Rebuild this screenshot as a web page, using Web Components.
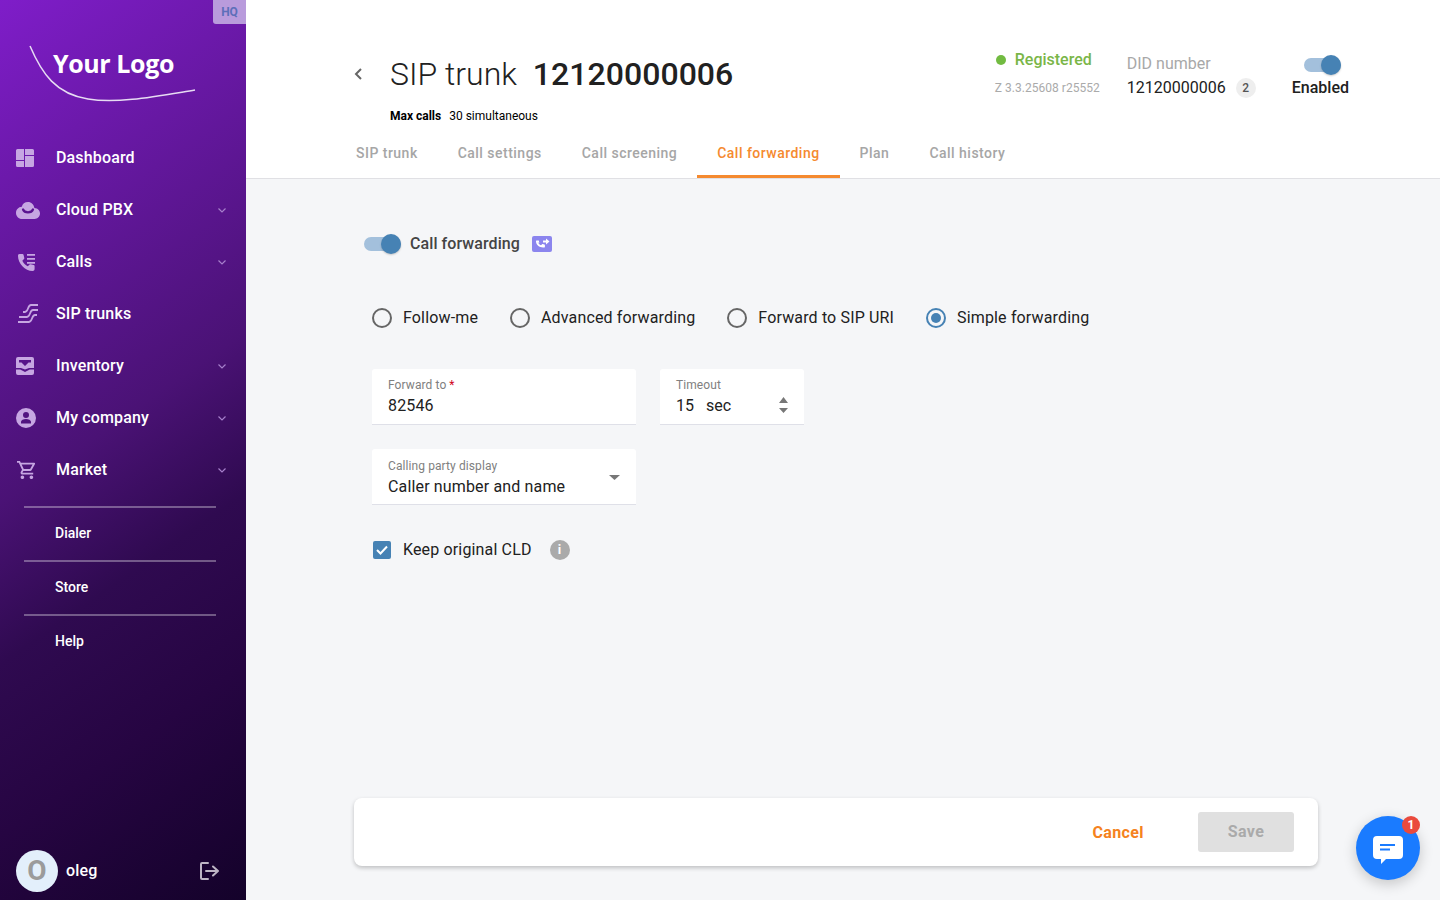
<!DOCTYPE html>
<html lang="en">
<head>
<meta charset="utf-8">
<title>SIP trunk</title>
<style>
    html, body { margin: 0; height: 100%; overflow: hidden; }
    body { font-family: Roboto, "Liberation Sans", sans-serif; color: #212121; }
</style>
</head>
<body>

<app-shell>
    <app-sidebar slot="sidebar">
        <nav-item label="Dashboard" icon="dashboard"></nav-item>
        <nav-item label="Cloud PBX" icon="cloud" expandable></nav-item>
        <nav-item label="Calls" icon="calls" expandable></nav-item>
        <nav-item label="SIP trunks" icon="trunks"></nav-item>
        <nav-item label="Inventory" icon="inventory" expandable></nav-item>
        <nav-item label="My company" icon="company" expandable></nav-item>
        <nav-item label="Market" icon="market" expandable></nav-item>
        <sub-link first>Dialer</sub-link>
        <sub-link>Store</sub-link>
        <sub-link>Help</sub-link>
    </app-sidebar>

    <page-header slot="header"></page-header>

    <tab-bar slot="header">
        <tab-item>SIP trunk</tab-item>
        <tab-item>Call settings</tab-item>
        <tab-item>Call screening</tab-item>
        <tab-item active>Call forwarding</tab-item>
        <tab-item>Plan</tab-item>
        <tab-item>Call history</tab-item>
    </tab-bar>

    <forward-form></forward-form>
    <action-bar slot="footer"></action-bar>
    <chat-button slot="overlay"></chat-button>
</app-shell>

<script>
    // Icons are kept here so nav-item only has to name one
    const navIcons = {
        dashboard: `<svg width="18" height="18" viewBox="0 0 18 18" fill="currentColor"><path d="M1.500 0H8v11H0V1.500A1.500 1.500 0 0 1 1.500 0zM0 12h8v6H1.500A1.500 1.500 0 0 1 0 16.500zM9 0h7.500A1.500 1.500 0 0 1 18 1.500V6H9zM9 7h9v9.500a1.500 1.500 0 0 1-1.500 1.500H9z"/></svg>`,
        cloud: `<svg width="24" height="17" viewBox="0 0 24 17"><path fill="currentColor" d="M12 0C8.700 0 6.400 2 5.800 4.800 2.500 5 0 7.600 0 11c0 3.300 2.700 6 6 6h12.600c3 0 5.400-2.400 5.400-5.400 0-3-2.300-5.400-5.600-5.600C17.800 2.400 15.400 0 12 0z"/><path d="M7 7.500c1.500 3.800 8.500 3.800 10 0" fill="none" stroke="#5a1490" stroke-width="2.200" stroke-linecap="round"/></svg>`,
        calls: `<svg width="20" height="20" viewBox="0 -1 20 20" fill="currentColor"><path d="M2.500 1h3c.6 0 1 .4 1.100.9l.7 3c.1.400 0 .8-.3 1.100L5.300 7.800c1.200 2.400 3.100 4.300 5.500 5.500l1.800-1.700c.3-.3.700-.4 1.100-.3l3 .7c.5.100.9.500.9 1.100v3c0 1.200-.8 2-2 2C8 18.100 1 10.500 1 3c0-1.200.3-2 1.500-2z" transform="translate(1 0)"/><path d="M11 1h8v1.800h-8zM11 5h8v1.800h-8zM11 9h8v1.800h-8z"/></svg>`,
        trunks: `<svg width="20" height="20" viewBox="0 0 20 20" fill="none" stroke="currentColor" stroke-width="1.800" style="margin-left:2px"><path d="M5 8 H7 C10.500 8 9.500 1 13 1 H20"/><path d="M1 13 H9 C12.500 13 11.500 6 15 6 H20"/><path d="M0 18 H11 C14.500 18 13.500 11 17 11 H19"/></svg>`,
        inventory: `<svg width="18" height="18" viewBox="0 0 18 18" fill="currentColor"><path fill-rule="evenodd" d="M2 0h14a2 2 0 0 1 2 2v9H13l-4 1.500L5 11H0V2a2 2 0 0 1 2-2zM3 3v2.500h2.500L9 9l3.500-3.500H15V3z"/><path d="M0 12.500h4.200L9 15l4.800-2.500H18V16a2 2 0 0 1-2 2H2a2 2 0 0 1-2-2z"/></svg>`,
        company: `<svg width="20" height="20" viewBox="0 0 20 20" fill="currentColor"><path fill-rule="evenodd" d="M10 0a10 10 0 1 1 0 20 10 10 0 0 1 0-20zM10 4a3 3 0 1 0 0 6 3 3 0 0 0 0-6zM10 11c-2.500 0-5 1.200-5 2.800V15.500h10v-1.700C15 12.200 12.500 11 10 11z"/></svg>`,
        market: `<svg width="18" height="18" viewBox="1 2 20 20" fill="currentColor" style="margin-left:1px"><path d="M15.550 13c.750 0 1.410-.410 1.750-1.030l3.580-6.490A.996.996 0 0 0 20.010 4H5.210l-.940-2H1v2h2l3.600 7.590-1.350 2.440C4.520 15.370 5.480 17 7 17h12v-2H7l1.100-2h7.450zM6.160 6h12.150l-2.760 5H8.530L6.160 6zM7 18c-1.100 0-1.990.900-1.990 2S5.900 22 7 22s2-.900 2-2-.900-2-2-2zm10 0c-1.100 0-1.990.900-1.990 2s.890 2 1.990 2 2-.900 2-2-.900-2-2-2z"/></svg>`
    };

    // Page frame: sidebar on the left, everything else in the right column
    class AppShell extends HTMLElement {
        constructor() {
            super();
            this.attachShadow({ mode: 'open' }).innerHTML = `
                <style>
                    :host { display: flex; height: 100vh; position: relative; }
                    .main { flex: 1; min-width: 0; display: flex; flex-direction: column; background: #f5f6f8; }
                    .head { background: #fff; border-bottom: 1px solid #e0e0e4; height: 178px; display: flex; flex-direction: column; }
                    .body { flex: 1; min-height: 0; }
                </style>
                <slot name="sidebar"></slot>
                <div class="main">
                    <div class="head"><slot name="header"></slot></div>
                    <div class="body"><slot></slot></div>
                    <slot name="footer"></slot>
                </div>
                <slot name="overlay"></slot>`;
        }
    }

    class AppSidebar extends HTMLElement {
        constructor() {
            super();
            this.attachShadow({ mode: 'open' }).innerHTML = `
                <style>
                    :host {
                        display: flex; flex-direction: column; position: relative;
                        width: 246px; flex: none; color: #fff;
                        background: linear-gradient(145deg, #7f1dc9 0%, #4a1275 47%, #2f0a50 62%, #260542 78%, #14022a 100%);
                    }
                    .hq {
                        position: absolute; top: 0; right: 0; width: 33px; height: 24px;
                        background: #b99bdc; border-bottom-left-radius: 3px;
                        color: #5d6fb9; font-size: 12px; font-weight: 700; line-height: 24px; text-align: center;
                    }
                    .logo { height: 131px; position: relative; flex: none; }
                    .logo span {
                        position: absolute; left: 53px; top: 46px;
                        font: 700 25px/34px "Open Sans", sans-serif; letter-spacing: -.4px;
                    }
                    .logo svg { position: absolute; left: 28px; top: 44px; }
                    nav { flex: 1; }
                    .user { display: flex; align-items: center; height: 42px; padding: 0 27px 8px 16px; }
                    .avatar {
                        width: 42px; height: 42px; border-radius: 50%; background: #e3effb;
                        color: #9b9b9b; font-size: 28px; font-weight: 700; line-height: 42px; text-align: center;
                    }
                    .name { margin: 0 0 2px 8px; font-size: 16px; font-weight: 500; flex: 1; letter-spacing: .15px; }
                    .out { color: #bdb5c4; display: block; }
                </style>
                <div class="hq">HQ</div>
                <div class="logo">
                    <svg width="170" height="62" viewBox="0 0 170 62" fill="none" stroke="#e7dcf3" stroke-width="1.500"><path d="M2 2 C14 30 28 50 60 55 C90 60 130 52 167 46"/></svg>
                    <span>Your Logo</span>
                </div>
                <nav><slot></slot></nav>
                <div class="user">
                    <div class="avatar">O</div>
                    <div class="name">oleg</div>
                    <svg class="out" width="20" height="20" viewBox="0 0 20 20" fill="none" stroke="currentColor" stroke-width="2" stroke-linejoin="round" stroke-linecap="round"><path d="M9 2H3a1 1 0 0 0-1 1v14a1 1 0 0 0 1 1h6"/><path d="M7 10h12M14 5.500l5 4.500-5 4.500"/></svg>
                </div>`;
        }
    }

    class NavItem extends HTMLElement {
        connectedCallback() {
            const chevron = this.hasAttribute('expandable')
                ? `<svg class="chev" width="8" height="5" viewBox="0 0 8 5" fill="none" stroke="#a67fcb" stroke-width="1.200"><path d="M.5.5L4 4 7.500.5"/></svg>`
                : '';
            this.attachShadow({ mode: 'open' }).innerHTML = `
                <style>
                    :host { display: flex; align-items: center; height: 52px; color: #c6a6e2; }
                    .ic { width: 40px; margin: 2px 0 0 16px; display: flex; align-items: center; }
                    .ic svg { display: block; }
                    .label { flex: 1; color: #fff; font-size: 16px; font-weight: 500; letter-spacing: .15px; }
                    .chev { margin-right: 20px; margin-top: 2px; }
                </style>
                <span class="ic">${navIcons[this.getAttribute('icon')]}</span>
                <span class="label">${this.getAttribute('label')}</span>
                ${chevron}`;
        }
    }

    class SubLink extends HTMLElement {
        constructor() {
            super();
            this.attachShadow({ mode: 'open' }).innerHTML = `
                <style>
                    :host { display: block; margin: 0 30px 0 24px; height: 54px; box-sizing: border-box; border-top: 2px solid rgba(255,255,255,.33); padding-left: 31px; color: #fff; font-size: 14px; font-weight: 500; line-height: 50px; }
                    :host([first]) { margin-top: 11px; }
                </style>
                <slot></slot>`;
        }
    }

    class SwitchToggle extends HTMLElement {
        constructor() {
            super();
            this.attachShadow({ mode: 'open' }).innerHTML = `
                <style>
                    :host { display: block; position: relative; width: 37px; height: 20px; flex: none; }
                    .track { position: absolute; left: 0; right: 0; top: 3px; height: 14px; border-radius: 7px; background: #a3c0dc; }
                    .knob { position: absolute; right: 0; top: 0; width: 20px; height: 20px; border-radius: 50%; background: #4682b4; box-shadow: 0 1px 2px rgba(0,0,0,.2); }
                </style>
                <div class="track"></div><div class="knob"></div>`;
        }
    }

    class PageHeader extends HTMLElement {
        constructor() {
            super();
            this.attachShadow({ mode: 'open' }).innerHTML = `
                <style>
                    :host { display: flex; height: 128px; padding: 0 91px 0 108px; box-sizing: border-box; }
                    .back { width: 36px; height: 148px; display: flex; align-items: center; color: #666; flex: none; }
                    .title-wrap { flex: 1; padding-top: 54px; }
                    h1 { margin: 0; font-size: 32px; font-weight: 300; line-height: 40px; color: #212121; white-space: nowrap; }
                    h1 b { font-weight: 500; margin-left: 8px; letter-spacing: .05px; }
                    .max { margin-top: 15px; font-size: 12px; line-height: 14px; color: #000; }
                    .max b { font-weight: 700; margin-right: 5px; }
                    .status { width: 132px; padding-top: 50px; }
                    .reg { display: flex; align-items: center; font-size: 16px; font-weight: 500; color: #7ab648; line-height: 20px; padding-left: 1px; }
                    .reg i { width: 10px; height: 10px; border-radius: 50%; background: #72bb41; margin-right: 9px; }
                    .ver { margin-top: 11px; font-size: 12px; line-height: 14px; color: #aaa; letter-spacing: .03px; }
                    .did { width: 165px; padding-top: 54px; }
                    .did-l { font-size: 16px; line-height: 20px; color: #a8a8a8; }
                    .did-n { display: flex; align-items: center; margin-top: 4px; font-size: 16px; line-height: 20px; }
                    .did-n i { margin-left: 10px; width: 20px; height: 20px; border-radius: 50%; background: #eee; color: #555; font: 500 12px/20px Roboto, sans-serif; text-align: center; }
                    .en { padding-top: 55px; display: flex; flex-direction: column; align-items: center; font-size: 16px; font-weight: 500; line-height: 20px; }
                    .en switch-toggle { margin: 0 0 3px 4px; }
                </style>
                <div class="back">
                    <svg width="8" height="12" viewBox="0 0 8 12" fill="none" stroke="currentColor" stroke-width="2"><path d="M7 1L2 6l5 5"/></svg>
                </div>
                <div class="title-wrap">
                    <h1>SIP trunk <b>12120000006</b></h1>
                    <div class="max"><b>Max calls</b> 30 simultaneous</div>
                </div>
                <div class="status">
                    <div class="reg"><i></i>Registered</div>
                    <div class="ver">Z 3.3.25608 r25552</div>
                </div>
                <div class="did">
                    <div class="did-l">DID number</div>
                    <div class="did-n">12120000006<i>2</i></div>
                </div>
                <div class="en"><switch-toggle></switch-toggle>Enabled</div>`;
        }
    }

    class TabBar extends HTMLElement {
        constructor() {
            super();
            this.attachShadow({ mode: 'open' }).innerHTML = `
                <style>:host { display: flex; height: 50px; padding-left: 90px; }</style>
                <slot></slot>`;
        }
    }

    class TabItem extends HTMLElement {
        constructor() {
            super();
            this.attachShadow({ mode: 'open' }).innerHTML = `
                <style>
                    :host { display: block; box-sizing: border-box; height: 50px; padding: 0 20px; line-height: 50px; font-size: 14px; font-weight: 500; letter-spacing: .48px; color: #a6a6a6; white-space: nowrap; }
                    :host([active]) { color: #f58a2f; border-bottom: 3px solid #f58a2f; }
                </style>
                <slot></slot>`;
        }
    }

    class RadioOption extends HTMLElement {
        constructor() {
            super();
            this.attachShadow({ mode: 'open' }).innerHTML = `
                <style>
                    :host { display: flex; align-items: center; gap: 11px; font-size: 16px; line-height: 20px; letter-spacing: .15px; }
                    .dot { width: 20px; height: 20px; box-sizing: border-box; border: 2px solid #666; border-radius: 50%; display: flex; align-items: center; justify-content: center; }
                    :host([checked]) .dot { border-color: #4682b4; }
                    :host([checked]) .dot::after { content: ""; width: 10px; height: 10px; border-radius: 50%; background: #4682b4; }
                </style>
                <span class="dot"></span><slot></slot>`;
        }
    }

    class FormField extends HTMLElement {
        connectedCallback() {
            const req = this.hasAttribute('required') ? '<em>*</em>' : '';
            this.attachShadow({ mode: 'open' }).innerHTML = `
                <style>
                    :host { display: block; position: relative; box-sizing: border-box; height: 56px; padding: var(--field-top, 8px) 16px 0; background: #fff; border-bottom: 1px solid #dfe0e8; border-radius: 3px 3px 0 0; }
                    .l { font-size: 12px; line-height: 16px; color: #808080; letter-spacing: .09px; }
                    em { color: #d0021b; font-style: normal; margin-left: 3px; }
                    .v { margin-top: 3px; font-size: 16px; line-height: 20px; color: #212121; white-space: pre; letter-spacing: var(--field-spacing, .15px); }
                    ::slotted(*) { position: absolute; }
                </style>
                <div class="l">${this.getAttribute('label')}${req}</div>
                <div class="v">${this.getAttribute('value')}</div>
                <slot></slot>`;
        }
    }

    class ForwardForm extends HTMLElement {
        constructor() {
            super();
            this.attachShadow({ mode: 'open' }).innerHTML = `
                <style>
                    :host { display: block; padding: 55px 0 0 118px; }
                    .head { display: flex; align-items: center; font-size: 16px; font-weight: 500; color: #444; line-height: 20px; letter-spacing: .08px; }
                    .head span { margin-left: 9px; }
                    .head svg { margin-left: 12px; display: block; }
                    .radios { display: flex; gap: 32px; margin: 54px 0 0 8px; }
                    .row { display: flex; gap: 24px; margin: 24px 0 0 8px; }
                    .radios + .row { margin-top: 41px; }
                    .w1 { width: 264px; }
                    .w2 { width: 144px; --field-spacing: 0; }
                    .sel { --field-top: 9px; }
                    .spin { right: 16px; top: 28px; display: block; }
                    .caret { right: 16px; top: 26px; display: block; }
                    .keep { display: flex; align-items: center; margin: 35px 0 0 9px; font-size: 16px; line-height: 20px; letter-spacing: .15px; }
                    .box { width: 18px; height: 18px; border-radius: 2px; background: #4682b4; display: flex; align-items: center; justify-content: center; margin-right: 12px; }
                    .info { margin-left: 18px; width: 20px; height: 20px; border-radius: 50%; background: #aaa; color: #fff; font: 700 13px/20px Roboto, sans-serif; text-align: center; }
                </style>
                <div class="head">
                    <switch-toggle></switch-toggle>
                    <span>Call forwarding</span>
                    <svg width="20" height="16" viewBox="0 0 20 16"><rect width="20" height="16" rx="2" fill="#8b85ee"/><path fill="#fff" d="M5.500 4.200c.7 1.500 1.900 2.800 3.500 3.600l1.100-1.100c.2-.1.400-.2.600-.1.500.2 1.100.3 1.700.3.300 0 .5.200.5.500v2c0 .3-.2.500-.5.500C8 10.500 4 8 4 3.500 4 3.200 4.200 3 4.500 3h2c.3 0 .5.200.5.500 0 .6.100 1.200.3 1.700 0 .2 0 .4-.2.600z" transform="translate(0 1.500)"/><path fill="#fff" d="M11 4.500h3V2.500l3.500 3-3.500 3v-2h-3z"/></svg>
                </div>
                <div class="radios">
                    <radio-option>Follow-me</radio-option>
                    <radio-option>Advanced forwarding</radio-option>
                    <radio-option>Forward to SIP URI</radio-option>
                    <radio-option checked>Simple forwarding</radio-option>
                </div>
                <div class="row">
                    <form-field class="w1" label="Forward to" value="82546" required></form-field>
                    <form-field class="w2" label="Timeout" value="15   sec">
                        <svg class="spin" width="9" height="16" viewBox="0 0 9 16" fill="#777"><path d="M4.500 0L9 6H0zM0 11h9l-4.500 5z"/></svg>
                    </form-field>
                </div>
                <div class="row">
                    <form-field class="w1 sel" label="Calling party display" value="Caller number and name">
                        <svg class="caret" width="11" height="5" viewBox="0 0 11 5" fill="#777"><path d="M0 0h11L5.500 5z"/></svg>
                    </form-field>
                </div>
                <div class="keep">
                    <span class="box"><svg width="12" height="10" viewBox="0 0 12 10" fill="none" stroke="#fff" stroke-width="2"><path d="M1 5l3.500 3.500L11 1.500"/></svg></span>
                    Keep original CLD
                    <span class="info">i</span>
                </div>`;
        }
    }

    class ActionBar extends HTMLElement {
        constructor() {
            super();
            this.attachShadow({ mode: 'open' }).innerHTML = `
                <style>
                    :host { display: flex; align-items: center; justify-content: flex-end; height: 68px; margin: 0 122px 34px 108px; padding-right: 24px; background: #fff; border-radius: 8px; box-shadow: 0 2px 4px rgba(0,0,0,.22); font-size: 16px; font-weight: 700; }
                    .cancel { color: #f58220; margin-right: 54px; letter-spacing: .4px; }
                    .save { width: 96px; height: 40px; border-radius: 3px; background: #e0e0e0; color: #aaa; line-height: 40px; text-align: center; letter-spacing: .4px; }
                </style>
                <span class="cancel">Cancel</span>
                <span class="save">Save</span>`;
        }
    }

    class ChatButton extends HTMLElement {
        constructor() {
            super();
            this.attachShadow({ mode: 'open' }).innerHTML = `
                <style>
                    :host { position: absolute; right: 20px; bottom: 20px; width: 64px; height: 64px; border-radius: 50%; background: #1a7bff; box-shadow: 0 4px 14px rgba(0,0,0,.2); display: flex; align-items: center; justify-content: center; }
                    .n { position: absolute; right: 0; top: 0; width: 18px; height: 18px; border-radius: 50%; background: #ea4a3d; color: #fff; font: 700 12px/18px Roboto, sans-serif; text-align: center; }
                    svg { display: block; margin-top: 3px; }
                </style>
                <svg width="30" height="28" viewBox="0 0 30 28"><path fill="#fff" d="M4 0h22a4 4 0 0 1 4 4v15a4 4 0 0 1-4 4H13l-5 5v-5H4a4 4 0 0 1-4-4V4a4 4 0 0 1 4-4z"/><path fill="#1a7bff" d="M7 8h15v2H7zM7 12.500h10v2H7z"/></svg>
                <span class="n">1</span>`;
        }
    }

    customElements.define('app-shell', AppShell);
    customElements.define('app-sidebar', AppSidebar);
    customElements.define('nav-item', NavItem);
    customElements.define('sub-link', SubLink);
    customElements.define('switch-toggle', SwitchToggle);
    customElements.define('page-header', PageHeader);
    customElements.define('tab-bar', TabBar);
    customElements.define('tab-item', TabItem);
    customElements.define('radio-option', RadioOption);
    customElements.define('form-field', FormField);
    customElements.define('forward-form', ForwardForm);
    customElements.define('action-bar', ActionBar);
    customElements.define('chat-button', ChatButton);
</script>
</body>
</html>
